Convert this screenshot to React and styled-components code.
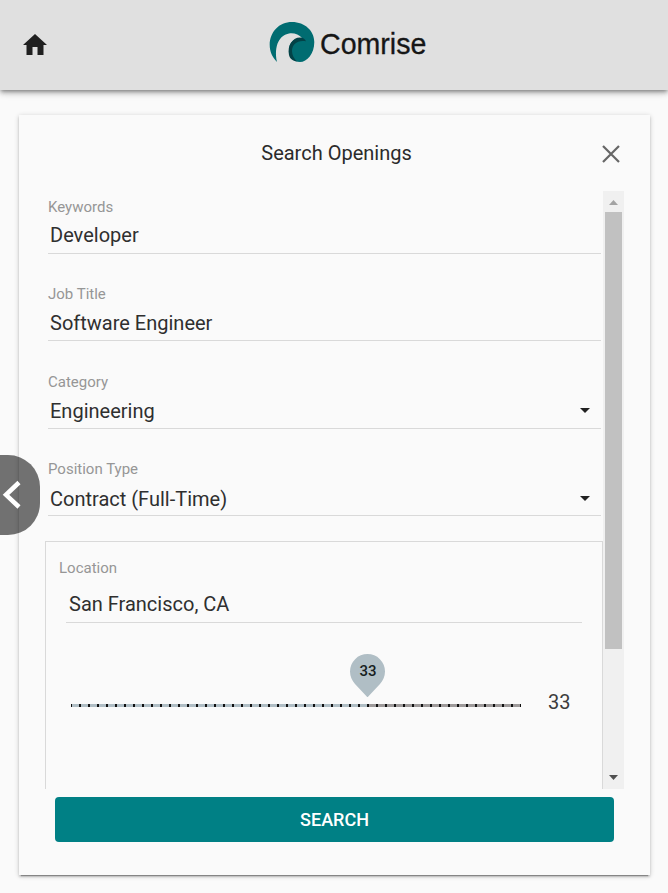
import React from "react";
import styled, { createGlobalStyle } from "styled-components";

const GlobalStyle = createGlobalStyle`
  * { box-sizing: border-box; }
  body {
    margin: 0;
    background: #fafafa;
    color: rgba(0, 0, 0, 0.87);
    font-family: Roboto, sans-serif;
    overflow: hidden;
  }
`;

const Page = styled.div`
  height: 893px;
  overflow: hidden;
`;

const Header = styled.header`
  height: 90px;
  display: grid;
  grid-template-columns: 70px 1fr 42px;
  align-items: center;
  background: #e0e0e0;
  box-shadow: 0 2px 4px -1px rgba(0, 0, 0, 0.4), 0 4px 5px rgba(0, 0, 0, 0.14),
    0 1px 10px rgba(0, 0, 0, 0.12);
`;

const HomeButton = styled.button`
  width: 26px;
  height: 26px;
  margin-left: 22px;
  padding: 0;
  border: 0;
  background: none;
  svg { display: block; }
`;

const Brand = styled.div`
  display: flex;
  height: 42px;
  padding-left: 199px;
  margin-top: -6px;
  svg { display: block; flex: none; }
`;

const BrandName = styled.span`
  margin-left: 5px;
  padding-top: 5px;
  font: 29px/36px "Liberation Sans", Arial, sans-serif;
  color: #161616;
  -webkit-text-stroke: 0.3px #161616;
  transform: scaleX(0.985);
  transform-origin: left;
`;

const Card = styled.main`
  width: 631px;
  height: 760px;
  margin: 25px 0 0 19px;
  padding: 0 26px;
  background: #fafafa;
  box-shadow: 0 1px 5px rgba(0, 0, 0, 0.2), 0 2px 2px rgba(0, 0, 0, 0.14),
    0 3px 1px -2px rgba(0, 0, 0, 0.3);
`;

const CardHeader = styled.div`
  height: 76px;
  display: grid;
  grid-template-columns: 26px 1fr 26px;
  align-items: center;
`;

const Title = styled.h1`
  margin: 0 0 0 4px;
  grid-column: 2;
  text-align: center;
  font-size: 20px;
  font-weight: 400;
  line-height: 24px;
  color: #2b2b2b;
`;

const CloseButton = styled.button`
  width: 18px;
  height: 18px;
  margin: 2px 0 0 4px;
  padding: 0;
  border: 0;
  background: none;
  svg { display: block; }
`;

const ScrollArea = styled.div`
  width: 579px;
  height: 598px;
  display: flex;
`;

const Form = styled.div`
  width: 558px;
  display: grid;
  grid-template-rows: 87px 88px 87px 88px 300px;
  overflow: hidden;
`;

const Field = styled.div`
  margin: 0 2px 0 3px;
  padding-top: 7px;
`;

const Label = styled.div`
  font-size: 15px;
  line-height: 18px;
  color: #969696;
`;

const Value = styled.div`
  height: 38px;
  padding: ${({ $drop }) => 6 + $drop}px 11px 0 2px;
  display: flex;
  justify-content: space-between;
  font-size: 20px;
  line-height: 27px;
  color: #2f2f2f;
  border-bottom: 1px solid #d9d9d9;
`;

const Caret = styled.i`
  width: 0;
  height: 0;
  margin-top: ${({ $top }) => $top}px;
  border: 5px solid transparent;
  border-top: 5.500px solid #212121;
  border-bottom: 0;
`;

const LocationBox = styled.section`
  border: 1px solid #d9d9d9;
  padding: 17px 20px 0;
`;

const LocationLabel = styled(Label)`
  margin-left: -7px;
`;

const LocationValue = styled(Value)`
  height: 46px;
  padding: 14px 0 0 3px;
`;

const SliderRow = styled.div`
  display: flex;
  margin: 31px 0 0 5px;
`;

const Slider = styled.div`
  width: 450px;
`;

const Bubble = styled.div`
  display: grid;
  width: 36px;
  height: 43px;
  margin-left: 279px;
  svg { grid-area: 1 / 1; }
`;

const BubbleText = styled.span`
  grid-area: 1 / 1;
  text-align: center;
  font-size: 15px;
  font-weight: 500;
  line-height: 35px;
  color: #161d20;
  z-index: 1;
`;

const Track = styled.div`
  height: 3px;
  margin-top: 7px;
  background:
    repeating-linear-gradient(90deg, #111 0 1.4px, transparent 1.4px 7.8px, #111 7.8px 9px),
    linear-gradient(90deg, #b0bec5 66%, #9e9a9a 66%);
`;

const SliderValue = styled.div`
  margin: 36px 0 0 27px;
  font-size: 20px;
  line-height: 24px;
  color: #3c3c3c;
`;

const Scrollbar = styled.div`
  width: 21px;
  background: #f0f0f0;
  display: flex;
  flex-direction: column;
  align-items: center;
  justify-content: space-between;
`;

const ScrollArrow = styled.div`
  height: 21px;
  svg { display: block; }
`;

const ScrollThumb = styled.div`
  width: 17px;
  height: 437px;
  margin-bottom: auto;
  background: #c1c1c1;
`;

const SearchButton = styled.button`
  display: block;
  width: 559px;
  height: 45px;
  margin: 8px 0 0 10px;
  padding: 0;
  border: 0;
  border-radius: 4px;
  background: #008085;
  color: #fff;
  font: 500 18px/45px Roboto, sans-serif;
`;

const DrawerHandle = styled.button`
  position: absolute;
  left: 0;
  top: 455px;
  width: 40px;
  height: 80px;
  padding: 0;
  border: 0;
  border-radius: 0 32px 32px 0;
  background: rgba(0, 0, 0, 0.55);
  svg { display: block; }
`;

const fields = [
  { label: "Keywords", value: "Developer", drop: 0 },
  { label: "Job Title", value: "Software Engineer", drop: 1 },
  { label: "Category", value: "Engineering", drop: 1, caretTop: 10 },
  { label: "Position Type", value: "Contract (Full-Time)", drop: 2, caretTop: 10 },
];

export default function App() {
  return (
    <Page>
      <GlobalStyle />
      <Header>
        <HomeButton aria-label="Home">
          <svg width="26" height="26" viewBox="0 0 26 26">
            <path d="M13 2 1 13h3.500v10h6v-8h5v8h6V13H25z" fill="#202020" />
          </svg>
        </HomeButton>
        <Brand>
          <svg width="46" height="42" viewBox="0 0 46 42">
            <path d="M8 41C3 36 .7 30 .7 24 .7 11 10 1 23 1s22.300 9 22.300 20C45.300 33 38 41 31 41c-7 0-11-5-11-12 0-7 5-12.500 13-12-3-3.500-8-5.300-13-4.500C11 14 4.500 24 8 41z" fill="#006c71" />
            <path d="M20 34C18 24 24 16.500 31 16.500c3 0 5 1.500 6 3.800C29 18.500 23 23 23 30c0 4 2 8 5 10.500-4-.5-7-2.500-8-6.500z" fill="#034247" />
          </svg>
          <BrandName>Comrise</BrandName>
        </Brand>
      </Header>
      <Card>
        <CardHeader>
          <Title>Search Openings</Title>
          <CloseButton aria-label="Close">
            <svg width="18" height="18" viewBox="0 0 18 18" stroke="#666" strokeWidth="2.200">
              <path d="M1 1 17 17M17 1 1 17" />
            </svg>
          </CloseButton>
        </CardHeader>
        <ScrollArea>
          <Form>
            {fields.map(({ label, value, drop, caretTop }) => (
              <Field key={label}>
                <Label>{label}</Label>
                <Value $drop={drop}>
                  {value}
                  {caretTop && <Caret $top={caretTop} />}
                </Value>
              </Field>
            ))}
            <LocationBox>
              <LocationLabel>Location</LocationLabel>
              <LocationValue $drop={0}>San Francisco, CA</LocationValue>
              <SliderRow>
                <Slider>
                  <Bubble>
                    <BubbleText>33</BubbleText>
                    <svg width="36" height="43" viewBox="0 0 36 43">
                      <path d="M17.500 0A17.500 17.500 0 0 1 35 17.500c0 5-2 9-5 12.500L17.500 43.300 5 30C2 26.500 0 22.500 0 17.500A17.500 17.500 0 0 1 17.500 0z" fill="#b0bec5" />
                    </svg>
                  </Bubble>
                  <Track />
                </Slider>
                <SliderValue>33</SliderValue>
              </SliderRow>
            </LocationBox>
          </Form>
          <Scrollbar>
            <ScrollArrow>
              <svg width="21" height="21" viewBox="0 0 21 21"><path d="M6 14 10.500 9 15 14z" fill="#a3a3a3" /></svg>
            </ScrollArrow>
            <ScrollThumb />
            <ScrollArrow>
              <svg width="21" height="21" viewBox="0 0 21 21"><path d="M6 7 10.500 12 15 7z" fill="#505050" /></svg>
            </ScrollArrow>
          </Scrollbar>
        </ScrollArea>
        <SearchButton>SEARCH</SearchButton>
      </Card>
      <DrawerHandle aria-label="Open drawer">
        <svg width="40" height="80" viewBox="0 0 40 80" fill="none" stroke="#fff" strokeWidth="4.500">
          <path d="M19 27.500 6 39.800 19 52" />
        </svg>
      </DrawerHandle>
    </Page>
  );
}
